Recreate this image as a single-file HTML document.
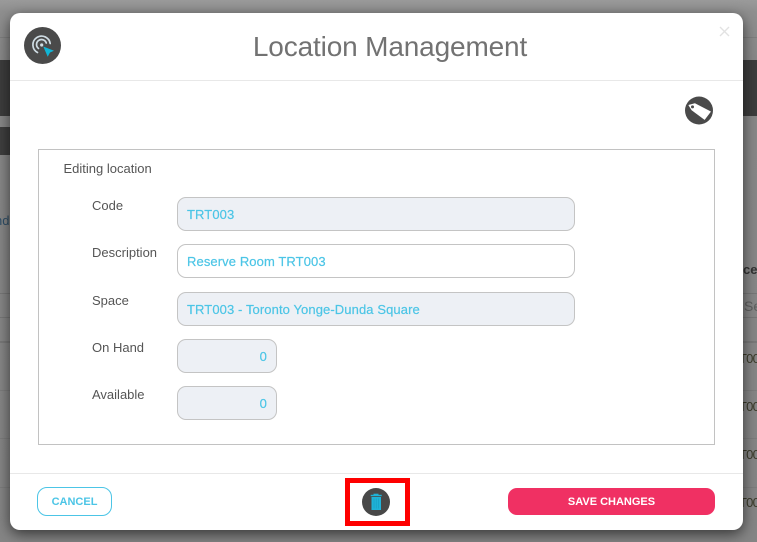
<!DOCTYPE html>
<html><head><meta charset="utf-8">
<style>
html,body{margin:0;padding:0;width:757px;height:542px;overflow:hidden;background:#8b8b8b;font-family:"Liberation Sans",sans-serif}
.a{position:absolute}
.lab{position:absolute;left:92px;font-size:13px;color:#555;line-height:16px;white-space:nowrap}
.inp{position:absolute;box-sizing:border-box;height:34px;border:1px solid #c4c4c4;border-radius:9px;background:#edf0f5;color:#4cc5e6;font-size:13px;line-height:33px;padding:0 9px;white-space:nowrap;letter-spacing:.1px;-webkit-text-stroke:.2px #4cc5e6}
.t{position:absolute;left:739px;font-size:13px;letter-spacing:-.8px;color:#3b3b2a;line-height:16px}
</style></head><body>
<div class="a" style="left:0;top:0;width:757px;height:542px;background:linear-gradient(#9a9a9a 0,#8f8f8f 12px,#888 60px,#858585 542px)"></div>
<div class="a" style="left:0;top:37px;width:757px;height:1px;background:#7f7f7f"></div>
<div class="a" style="left:0;top:60px;width:757px;height:56px;background:#3d3d3d"></div>
<div class="a" style="left:0;top:127px;width:40px;height:28px;background:#3f3f3f"></div>
<div class="a" style="left:-5px;top:213px;font-size:13px;color:#2f4f68;line-height:16px">nd</div>
<div class="a" style="left:0;top:293px;width:757px;height:1px;background:#777"></div>
<div class="a" style="left:0;top:317px;width:757px;height:1px;background:#777"></div>
<div class="a" style="left:0;top:341px;width:757px;height:2px;background:#797979"></div>
<div class="a" style="left:0;top:390px;width:757px;height:1px;background:#7d7d7d"></div>
<div class="a" style="left:0;top:438px;width:757px;height:1px;background:#7d7d7d"></div>
<div class="a" style="left:0;top:487px;width:757px;height:1px;background:#7d7d7d"></div>
<div class="a" style="left:743px;top:262px;font-size:13px;font-weight:bold;color:#333;line-height:16px">ce</div>
<div class="a" style="left:744px;top:298px;font-size:14px;color:#5f5f5f;line-height:16px">Se</div>
<div class="t" style="top:351px">T00</div>
<div class="t" style="top:399px">T00</div>
<div class="t" style="top:447px">T00</div>
<div class="t" style="top:495px">T00</div>

<div class="a" style="left:10px;top:13px;width:733px;height:517px;background:#fff;border-radius:10px;box-shadow:0 4px 14px rgba(0,0,0,.6)"></div>
<div class="a" style="left:10px;top:80px;width:733px;height:1px;background:#e8e8e8"></div>
<div class="a" style="left:10px;top:473px;width:733px;height:1px;background:#e8e8e8"></div>

<svg class="a" style="left:24px;top:27px" width="37" height="37" viewBox="0 0 37 37">
<circle cx="18.5" cy="18.5" r="18.5" fill="#4a4a4a"/>
<g fill="none" stroke="#cfdce3" stroke-width="1.7" stroke-linecap="round">
<path d="M13.5 25.5A8.7 8.7 0 1 1 26.2 16.5"/>
<path d="M14.5 21.5A5 5 0 1 1 22.3 16"/>
</g>
<circle cx="17.7" cy="18" r="1.6" fill="#cfdce3"/>
<path d="M19.3 19.5L30 23.7L26 25.5L23.7 29.7Z" fill="#10b5d6"/>
</svg>

<div class="a" style="left:240px;top:30px;width:300px;text-align:center;font-size:28px;color:#727272;line-height:34px;white-space:nowrap;letter-spacing:-.15px">Location Management</div>
<svg class="a" style="left:719px;top:26px" width="11" height="11" viewBox="0 0 11 11"><path d="M1 1L10 10M10 1L1 10" stroke="#e2e2e2" stroke-width="1.4" fill="none"/></svg>

<svg class="a" style="left:685px;top:96px" width="28" height="29" viewBox="0 0 28 29">
<circle cx="14" cy="14.5" r="14" fill="#4a4a4a"/>
<path d="M3.8 9.2L10 7.6L25.5 15.7L19.6 23.5L6.8 14Z" fill="#fff" stroke="#fff" stroke-width=".6" stroke-linejoin="round"/>
<circle cx="7.5" cy="10.9" r="1.5" fill="#4a4a4a"/>
</svg>

<div class="a" style="left:38px;top:149px;width:677px;height:296px;box-sizing:border-box;border:1px solid #c2c2c2"></div>
<div class="a" style="left:63.5px;top:161px;font-size:13px;color:#555;line-height:16px">Editing location</div>

<div class="lab" style="top:198px">Code</div>
<div class="inp" style="left:177px;top:197px;width:398px">TRT003</div>
<div class="lab" style="top:245px">Description</div>
<div class="inp" style="left:177px;top:244px;width:398px;background:#fff">Reserve Room TRT003</div>
<div class="lab" style="top:293px">Space</div>
<div class="inp" style="left:177px;top:292px;width:398px">TRT003 - Toronto Yonge-Dunda Square</div>
<div class="lab" style="top:340px">On Hand</div>
<div class="inp" style="left:177px;top:339px;width:100px;text-align:right">0</div>
<div class="lab" style="top:387px">Available</div>
<div class="inp" style="left:177px;top:386px;width:100px;text-align:right">0</div>

<div class="a" style="left:37px;top:487px;width:75px;height:29px;box-sizing:border-box;border:1px solid #4cc5e6;border-radius:10px;color:#4cc5e6;font-size:11px;font-weight:bold;text-align:center;line-height:29px">CANCEL</div>
<div class="a" style="left:345px;top:478px;width:65px;height:48px;box-sizing:border-box;border:5px solid #fe0000"></div>
<svg class="a" style="left:362px;top:488px" width="28" height="28" viewBox="0 0 28 28">
<circle cx="14" cy="14" r="14" fill="#484848"/>
<rect x="11.5" y="5.7" width="5" height="1.4" fill="#1fb3d8"/>
<rect x="8.7" y="6.8" width="11" height="1.4" fill="#1fb3d8"/>
<rect x="9.5" y="9" width="9.5" height="13" fill="#1fb3d8"/>
<path d="M12 10.5V20.5M14.2 10.5V20.5M16.5 10.5V20.5" stroke="#179cc0" stroke-width=".6"/>
</svg>
<div class="a" style="left:508px;top:488px;width:207px;height:27px;background:#f03063;border-radius:9px;color:#fff;font-size:11px;font-weight:bold;text-align:center;line-height:28px">SAVE CHANGES</div>
</body></html>
